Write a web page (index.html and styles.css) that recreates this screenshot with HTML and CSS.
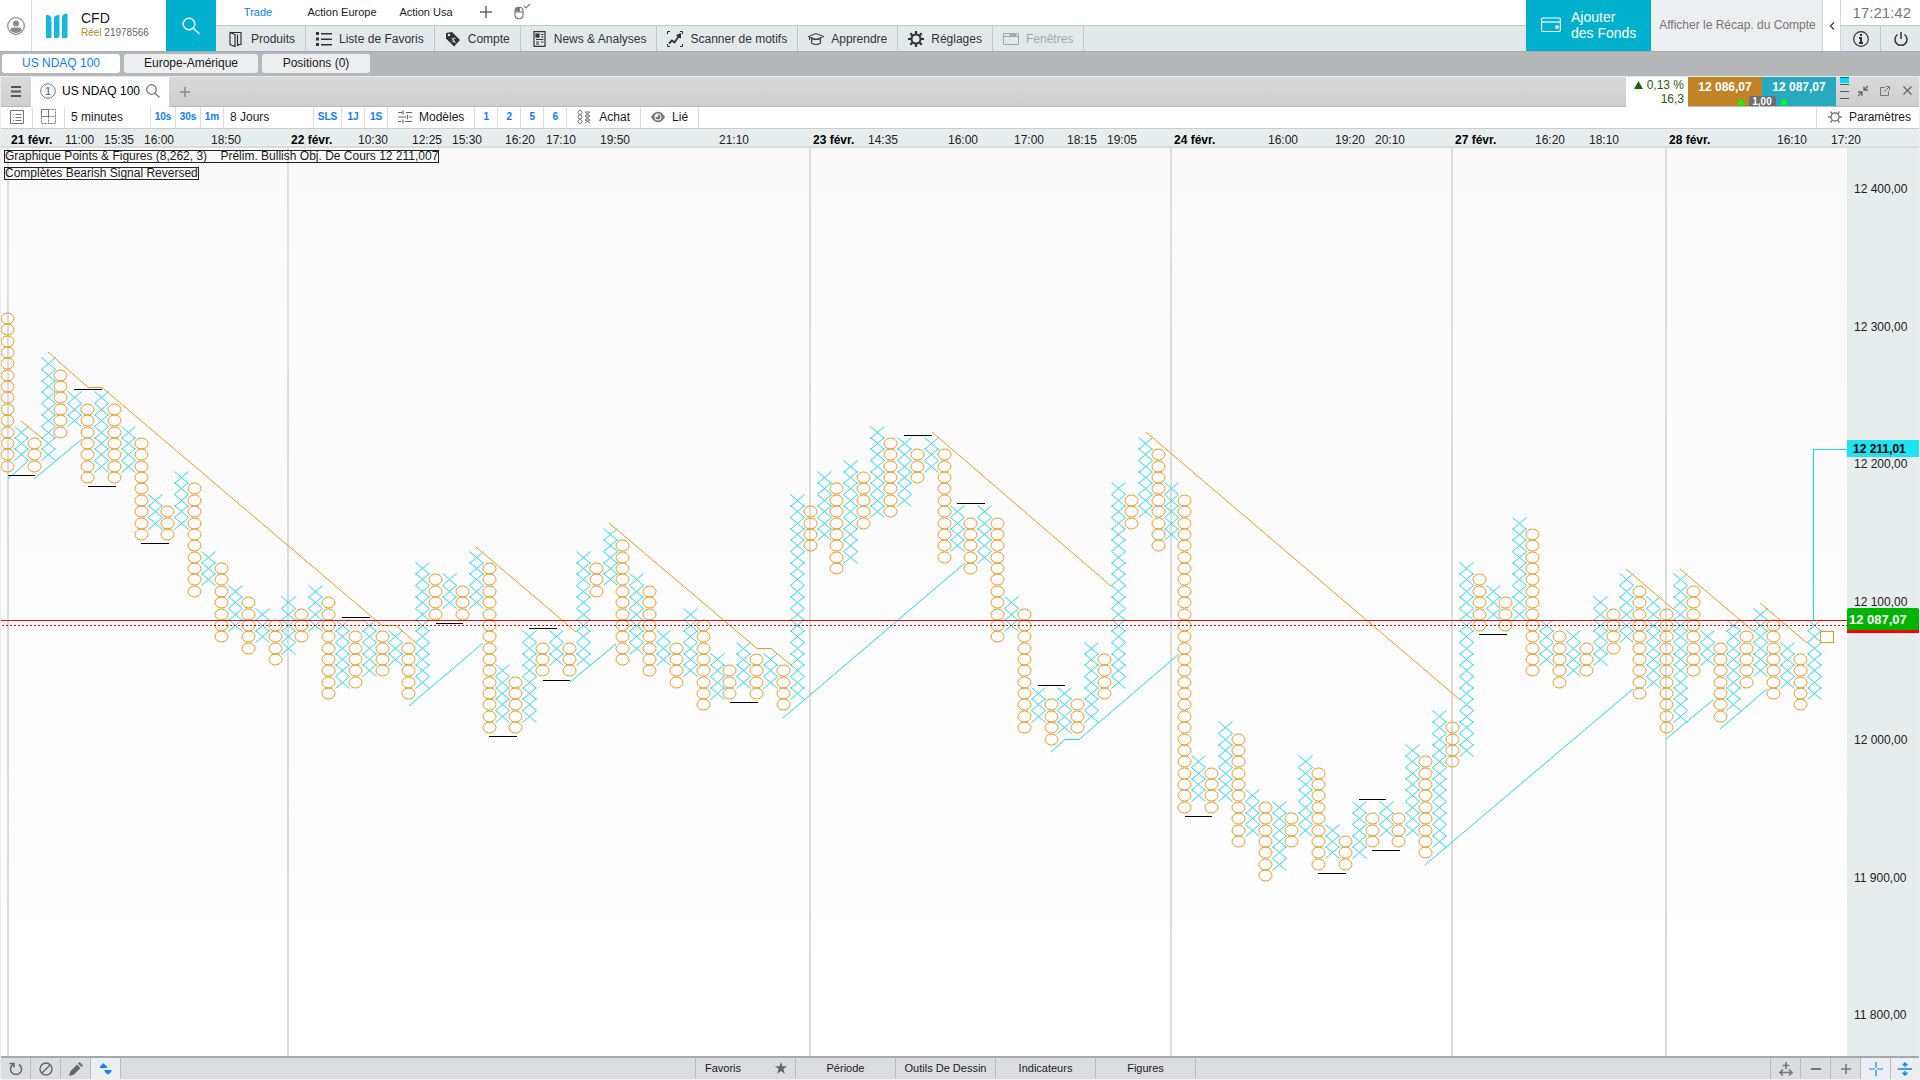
FILE: index.html
```html
<!DOCTYPE html>
<html lang="fr">
<head>
    <meta charset="UTF-8">
    <meta name="viewport" content="width=device-width, initial-scale=1.0">
    <title>US NDAQ 100 - CFD</title>
    <link rel="stylesheet" href="styles.css">
</head>
<body>
    <header class="header">
        <button class="user-button" aria-label="Profil">
            <svg width="18" height="18" viewBox="0 0 18 18"><circle cx="9" cy="9" r="8.300" fill="none" stroke="#8a8a8a" stroke-width="1.200"/><circle cx="9" cy="6.500" r="3" fill="#8a8a8a"/><path d="M3 13c1-2.500 3.500-2.500 6-2.500s5 0 6 2.500c-1.500 2-3.500 3-6 3s-4.500-1-6-3z" fill="#8a8a8a"/></svg>
        </button>
        <div class="account">
            <svg width="22" height="26" viewBox="0 0 22 26" fill="#14b8dc"><path d="M0 2c4 0 5.500 1.500 5.500 4v19H0zM8 5c0-2 2-3 5.500-3v21c0 1-.500 2-1.500 2H8zM16 4.500C16 2 18 .5 21.500.5v23c0 1-.500 1.500-1.500 1.500h-4z"/></svg>
            <div class="account-text">
                <div class="account-type">CFD</div>
                <div class="account-id"><span class="account-mode">Réel</span> 21978566</div>
            </div>
        </div>
        <button class="search-button" aria-label="Rechercher">
            <svg width="18" height="18" viewBox="0 0 18 18" fill="none" stroke="#fff" stroke-width="1.400"><circle cx="7" cy="7" r="5.800"/><path d="M11 11l6.500 6"/></svg>
        </button>
        <div class="menus">
            <nav class="layouts">
                <a class="layout active" href="#">Trade</a>
                <a class="layout" href="#">Action Europe</a>
                <a class="layout" href="#">Action Usa</a>
                <button class="layout-tool" aria-label="Ajouter un onglet">
                    <svg width="12" height="12" viewBox="0 0 12 12" stroke="#666" stroke-width="1.500"><path d="M6 0v12M0 6h12"/></svg>
                </button>
                <button class="layout-tool" aria-label="Souris">
                    <svg width="18" height="18" viewBox="0 0 18 18" fill="none" stroke="#777" stroke-width="1.200"><path d="M2 8c0-5 8-5 8 0v4c0 5-8 5-8 0zM2 9h8M6 4.500V9"/><path d="M3 5h3v3H3z" fill="#777"/><path d="M11 3l2 2 4-4"/></svg>
                </button>
            </nav>
            <nav class="nav">
                <a class="nav-item" href="#">
                    <svg width="16" height="16" viewBox="0 0 16 16" fill="none" stroke="#333" stroke-width="1.200"><path d="M2 1.500h11v12h-3M2 1.500l5 2v12l-5-2zM9.500 3.500v11l2-1"/></svg>
                    Produits</a>
                <a class="nav-item" href="#">
                    <svg width="16" height="16" viewBox="0 0 16 16" fill="#333"><path d="M0 1h3v3H0zM0 6.500h3v3H0zM0 12h3v3H0zM5 2h11v1.500H5zM5 7.500h11V9H5zM5 13h11v1.500H5z"/></svg>
                    Liste de Favoris</a>
                <a class="nav-item" href="#">
                    <svg width="16" height="16" viewBox="0 0 16 16"><path d="M1 2l6-1 8 8-6 6.500-8-8z" fill="#333"/><circle cx="4" cy="4" r="1.200" fill="#e3e9ea"/><path d="M10.500 7.500c-2-1.500-3 0-2 1.500s0 3-2 1M7 7l3.500 5" fill="none" stroke="#e3e9ea"/></svg>
                    Compte</a>
                <a class="nav-item" href="#">
                    <svg width="16" height="16" viewBox="0 0 16 16" fill="none" stroke="#333" stroke-width="1.200"><path d="M3 .6h11v14.800H3z"/><path d="M5 3.500h3M10 3.500h2.500M5 6h3M10 6h2.500M5 8.500h7.500M5 11h3M10 11h2.500M5 13h3"/><path d="M5 3h3v3H5z" fill="#333"/></svg>
                    News &amp; Analyses</a>
                <a class="nav-item" href="#">
                    <svg width="16" height="16" viewBox="0 0 16 16" fill="none" stroke="#333"><path d="M.5 3V.5H3M13 .5h2.500V3M15.500 13v2.500H13M3 15.500H.5V13"/><path d="M2 12.500l3-3 2.500 2L12 5" stroke-width="1.800"/><path d="M9.500 4.500L13.500 2.500v4.500z" fill="#333"/></svg>
                    Scanner de motifs</a>
                <a class="nav-item" href="#">
                    <svg width="16" height="16" viewBox="0 0 16 16" fill="none" stroke="#444" stroke-width="1.100"><path d="M.5 5.500L8 2.500l7.500 3L8 8.500zM3.500 7v5c2.500 2 6.500 2 9 0V7M3.500 9c3-1 6-1 9 0M1.500 6v3"/></svg>
                    Apprendre</a>
                <a class="nav-item" href="#">
                    <svg width="16" height="16" viewBox="0 0 16 16" fill="none" stroke="#333"><circle cx="8" cy="8" r="4.500" stroke-width="2"/><path d="M8 0v3M8 13v3M0 8h3M13 8h3M2.300 2.300l2.200 2.200M11.500 11.500l2.200 2.200M2.300 13.700l2.200-2.200M11.500 4.500l2.200-2.200" stroke-width="2.200"/></svg>
                    Réglages</a>
                <a class="nav-item disabled" href="#">
                    <svg width="16" height="16" viewBox="0 0 16 16" fill="none" stroke="#a5a9aa"><path d="M.5 2.500h15v11H.5zM.5 5.500h15"/><path d="M7 3h6v2H7z" fill="#a5a9aa"/></svg>
                    Fenêtres</a>
            </nav>
        </div>
        <button class="funds-button">
            <svg width="20" height="16" viewBox="0 0 20 16" fill="none" stroke="#fff" stroke-width="1.200"><rect x=".6" y="1" width="18.800" height="13.500" rx="1.500"/><path d="M.6 5h18.800"/><path d="M15 9h2v2h-2z" fill="#fff"/></svg>
            <span>Ajouter<br>des Fonds</span>
        </button>
        <button class="summary-button">Afficher le Récap. du Compte</button>
        <button class="collapse-button" aria-label="Réduire">
            <svg width="6" height="8" viewBox="0 0 6 8" fill="none" stroke="#555" stroke-width="1.600"><path d="M5 .5L1.500 4 5 7.500"/></svg>
        </button>
        <div class="status">
            <div class="clock">17:21:42</div>
            <div class="status-buttons">
                <button aria-label="Informations">
                    <svg width="16" height="16" viewBox="0 0 16 16" fill="none" stroke="#333" stroke-width="1.200"><circle cx="8" cy="8" r="7.300"/><path d="M8 3v2M6 7h2v5M6 12h4" stroke-width="2"/></svg>
                </button>
                <button aria-label="Déconnexion">
                    <svg width="16" height="16" viewBox="0 0 16 16" fill="none" stroke="#333" stroke-width="1.500"><path d="M8 1v7M4.500 3.500a6 6 0 1 0 7 0"/></svg>
                </button>
            </div>
        </div>
    </header>

    <nav class="pages">
        <a class="page active" href="#">US NDAQ 100</a>
        <a class="page page-wide" href="#">Europe-Amérique</a>
        <a class="page" href="#">Positions (0)</a>
    </nav>

    <main class="window">
        <div class="title-bar">
            <button class="menu-button" aria-label="Menu">
                <svg width="10" height="11" viewBox="0 0 10 11" stroke="#555" stroke-width="2"><path d="M0 1h10M0 5.500h10M0 10h10"/></svg>
            </button>
            <div class="chart-tab">
                <svg width="16" height="16" viewBox="0 0 16 16"><circle cx="8" cy="8" r="7.300" fill="none" stroke="#777"/><text class="tab-number" x="8" y="12" text-anchor="middle">1</text></svg>
                <span>US NDAQ 100</span>
                <svg width="14" height="14" viewBox="0 0 14 14" fill="none" stroke="#777" stroke-width="1.300"><circle cx="5.500" cy="5.500" r="4.800"/><path d="M9 9l4.500 4.500"/></svg>
            </div>
            <button class="add-button" aria-label="Ajouter">
                <svg width="10" height="10" viewBox="0 0 10 10" stroke="#888" stroke-width="1.500"><path d="M5 0v10M0 5h10"/></svg>
            </button>
            <div class="change">
                <div><svg width="9" height="8" viewBox="0 0 9 8" fill="#1f6008"><path d="M4.500 0L9 8H0z"/></svg> 0,13 %</div>
                <div>16,3</div>
            </div>
            <div class="quotes">
                <button class="quote sell">12 086,07</button>
                <button class="quote buy">12 087,07</button>
                <div class="spread">
                    <svg width="8" height="7" viewBox="0 0 8 7" fill="#0f0"><path d="M4 0l4 7H0z"/></svg>
                    <span>1,00</span>
                    <svg width="8" height="7" viewBox="0 0 8 7" fill="#0f0"><path d="M4 0l4 7H0z"/></svg>
                </div>
            </div>
            <div class="window-buttons">
                <svg width="9" height="27" viewBox="0 0 9 27"><path d="M0 0h9v6H0z" fill="#00dcff"/><path d="M0 7.500h9M0 14.500h9M0 21.500h9" stroke="#555"/><path d="M0 .5h9" stroke="#077"/></svg>
                <button aria-label="Réduire">
                    <svg width="12" height="12" viewBox="0 0 12 12" fill="none" stroke="#666" stroke-width="1.300"><path d="M11 1L7.500 4.500M7 1.500V5h4M1 11l3.500-3.500M1 7h4v4"/></svg>
                </button>
                <button aria-label="Détacher">
                    <svg width="10" height="10" viewBox="0 0 10 10" fill="none" stroke="#777"><path d="M5 1.500H.5v8h8V5M4 6l5-5M6 .5h3.500V4"/></svg>
                </button>
                <button aria-label="Fermer">
                    <svg width="9" height="9" viewBox="0 0 9 9" stroke="#666" stroke-width="1.200"><path d="M.5.5l8 8M8.500.5l-8 8"/></svg>
                </button>
            </div>
        </div>

        <div class="toolbar">
            <button class="tool tool-icon" aria-label="Liste">
                <svg width="14" height="14" viewBox="0 0 14 14" fill="none" stroke="#777"><path d="M.5.5h13v13H.5zM3 4.500h1M5.500 4.500h6M3 7.500h1M5.500 7.500h6M3 10.500h1M5.500 10.500h6"/></svg>
            </button>
            <button class="tool tool-icon" aria-label="Disposition">
                <svg width="15" height="15" viewBox="0 0 15 15" fill="none" stroke="#777"><path d="M.5.5h7v7h-7z"/><path d="M7.500.5h7v14H.5v-7M7.500 7.500v7M7.500 7.500h7" stroke-dasharray="2 1"/></svg>
            </button>
            <button class="tool tool-period">5 minutes</button>
            <button class="tool tool-short">10s</button>
            <button class="tool tool-short">30s</button>
            <button class="tool tool-short">1m</button>
            <button class="tool tool-range">8 Jours</button>
            <button class="tool tool-short tool-sls">SLS</button>
            <button class="tool tool-short">1J</button>
            <button class="tool tool-short">1S</button>
            <button class="tool tool-label">
                <svg width="14" height="14" viewBox="0 0 14 14" fill="none" stroke="#666" stroke-width="1.200"><path d="M0 2.500h4M8 2.500h6M0 7h8M11 7h3M0 11.500h3M7 11.500h7M5 .5v4M9.500 5v4M5 9.500v4"/></svg>
                Modèles</button>
            <button class="tool tool-short">1</button>
            <button class="tool tool-short">2</button>
            <button class="tool tool-short">5</button>
            <button class="tool tool-short">6</button>
            <button class="tool tool-label">
                <svg width="15" height="14" viewBox="0 0 15 14" fill="none" stroke="#777"><circle cx="3" cy="2.500" r="2"/><circle cx="3" cy="7" r="2"/><circle cx="3" cy="11.500" r="2"/><path d="M8 2l5 4M13 2L8 6l5 4M13 6l-5 4 5 3M13 10l-5 3M8 2h5M8 6h5M8 10h5"/></svg>
                Achat</button>
            <button class="tool tool-label">
                <svg width="14" height="12" viewBox="0 0 14 12"><path d="M0 6c4-7 10-7 14 0-4 7-10 7-14 0z" fill="#777"/><circle cx="7" cy="6" r="3.500" fill="#fff"/><path d="M7 6V3.500A2.500 2.500 0 1 1 4.500 6z" fill="#777"/></svg>
                Lié</button>
            <button class="tool tool-label tool-settings">
                <svg width="14" height="14" viewBox="0 0 14 14" fill="none" stroke="#777" stroke-width="1.300"><circle cx="7" cy="7" r="4"/><path d="M0 7h3M11 7h3M2.500 1.500l2 2.500M11.500 1.500l-2 2.500M2.500 12.500l2-2.500M11.500 12.500l-2-2.500"/></svg>
                Paramètres</button>
        </div>

        <svg class="time-axis" id="timeAxis"></svg>
        <div class="chart">
            <svg class="plot" id="plot"></svg>
            <svg class="price-axis" id="priceAxis"></svg>
            <div class="legend">
                <span>Graphique Points &amp; Figures (8,262, 3)&nbsp;&nbsp;&nbsp; Prélim. Bullish Obj. De Cours 12 211,007</span>
                <span>Complètes Bearish Signal Reversed</span>
            </div>
        </div>

        <footer class="footer">
            <div class="footer-group">
                <button class="footer-icon" aria-label="Réinitialiser">
                    <svg width="14" height="14" viewBox="0 0 14 14" fill="none" stroke="#666" stroke-width="1.500"><path d="M4 2.500a5.500 5.500 0 1 0 6 0M.5 1.500H5v4"/></svg>
                </button>
                <button class="footer-icon" aria-label="Effacer">
                    <svg width="14" height="14" viewBox="0 0 14 14" fill="none" stroke="#666" stroke-width="1.400"><circle cx="7" cy="7" r="6"/><path d="M3 11l8-8"/></svg>
                </button>
                <button class="footer-icon" aria-label="Dessiner">
                    <svg width="14" height="14" viewBox="0 0 14 14" fill="#666"><path d="M0 14l1.500-5L8 2.500 11.500 6 5 12.500zM9 1.500L10.500 0 14 3.500 12.500 5z"/></svg>
                </button>
                <button class="footer-icon on" aria-label="Échelle">
                    <svg width="12" height="12" viewBox="0 0 12 12" fill="#0a84ff"><path d="M0 5c0-3 2.500-3 3.500-5C4.500 2 7 2 7 5zM4.500 7h7c0 3-2.500 3-3.500 5-1-2-3.500-2-3.500-5z"/></svg>
                </button>
            </div>
            <div class="footer-group footer-menus">
                <button class="footer-menu favorites">Favoris
                    <svg width="12" height="12" viewBox="0 0 12 12" fill="#666"><path d="M6 0l1.500 4.300H12L8.400 7l1.400 4.700L6 9l-3.800 2.700L3.600 7 0 4.300h4.500z"/></svg>
                </button>
                <button class="footer-menu">Période</button>
                <button class="footer-menu">Outils De Dessin</button>
                <button class="footer-menu">Indicateurs</button>
                <button class="footer-menu">Figures</button>
            </div>
            <div class="footer-group footer-zoom">
                <button class="footer-icon" aria-label="Ajuster">
                    <svg width="14" height="14" viewBox="0 0 14 14" fill="none" stroke="#777" stroke-width="1.600"><path d="M7 0v7M3.500 3.500h7M1 10.500h12M4 7.500l-3 3 3 3M10 7.500l3 3-3 3"/></svg>
                </button>
                <button class="footer-icon" aria-label="Zoom arrière">
                    <svg width="10" height="10" viewBox="0 0 10 10" stroke="#777" stroke-width="2"><path d="M0 5h10"/></svg>
                </button>
                <button class="footer-icon" aria-label="Zoom avant">
                    <svg width="10" height="10" viewBox="0 0 10 10" stroke="#777" stroke-width="1.600"><path d="M5 0v10M0 5h10"/></svg>
                </button>
                <button class="footer-icon on" aria-label="Curseur">
                    <svg width="14" height="14" viewBox="0 0 14 14" stroke="#0a84ff" stroke-width="1.200"><path d="M7 0v6M7 8v6M0 7h6M8 7h6"/></svg>
                </button>
                <button class="footer-icon on" aria-label="Centrer">
                    <svg width="14" height="14" viewBox="0 0 14 14" fill="none" stroke="#0a84ff" stroke-width="1.400"><path d="M0 7h14M7 5V1M4.500 3.500L7 1l2.500 2.500M7 9v4M4.500 10.500L7 13l2.500-2.500"/></svg>
                </button>
            </div>
        </footer>
    </main>

    <script src="chart.js"></script>
</body>
</html>
```
FILE: styles.css
```css
* {
    box-sizing: border-box;
}

body {
    margin: 0;
    height: 100vh;
    display: flex;
    flex-direction: column;
    background-color: #b6b7b9;
    color: #1a1a1a;
    font-family: "Liberation Sans", Arial, sans-serif;
    font-size: 12px;
    overflow: hidden;
}

button {
    padding: 0;
    border: none;
    background: none;
    color: inherit;
    font-family: inherit;
    font-size: inherit;
    cursor: pointer;
}

a {
    color: inherit;
    text-decoration: none;
}

svg {
    display: block;
    flex-shrink: 0;
}

/* header */
.header {
    display: flex;
    height: 51px;
    background-color: white;
}

.user-button {
    width: 32px;
    display: flex;
    align-items: center;
    justify-content: center;
    border-right: 1px solid #ddd;
}

.account {
    width: 134px;
    display: flex;
    align-items: center;
    gap: 13px;
    padding-left: 14px;
}

.account-type {
    font-size: 14px;
    line-height: 14px;
}

.account-id {
    font-size: 10px;
    line-height: 16px;
    color: #666;
    white-space: nowrap;
}

.account-mode {
    color: #c08a1a;
}

.search-button {
    width: 50px;
    background-color: #00b0cd;
    display: flex;
    align-items: center;
    justify-content: center;
}

.menus {
    flex: 1;
    display: flex;
    flex-direction: column;
}

.layouts {
    height: 25px;
    display: flex;
    align-items: center;
    padding-bottom: 2px;
    font-size: 11px;
}

.layout {
    width: 84px;
    text-align: center;
}

.layout.active {
    color: #0a7cff;
}

.layout-tool {
    width: 36px;
    display: flex;
    justify-content: center;
}

.nav {
    flex: 1;
    display: flex;
    background-color: #e3e9ea;
    border-top: 1px solid #c3c7c9;
}

.nav-item {
    display: flex;
    align-items: center;
    gap: 7px;
    padding: 0 10px;
    border-right: 1px solid #c3c7c9;
    color: #333;
    white-space: nowrap;
}

.nav-item:first-child {
    padding-left: 12px;
}

.nav-item.disabled {
    color: #a5a9aa;
}

.funds-button {
    width: 125px;
    display: flex;
    align-items: center;
    gap: 10px;
    padding: 0 0 2px 15px;
    background-color: #00b0cd;
    color: white;
    font-size: 14px;
    line-height: 16px;
    text-align: left;
}

.summary-button {
    width: 171px;
    padding: 0 0 2px 2px;
    background-color: #edeef0;
    color: #777;
}

.collapse-button {
    width: 19px;
    display: flex;
    align-items: center;
    justify-content: center;
    border-left: 1px solid #d5d5d5;
    border-right: 1px solid #d5d5d5;
}

.status {
    width: 79px;
    display: flex;
    flex-direction: column;
}

.clock {
    height: 25px;
    line-height: 26px;
    padding-right: 9px;
    text-align: right;
    font-size: 15px;
    color: #777;
}

.status-buttons {
    flex: 1;
    display: flex;
    background-color: #e3e9ea;
    border-top: 1px solid #c3c7c9;
}

.status-buttons button {
    flex: 1;
    display: flex;
    align-items: center;
    justify-content: center;
}

.status-buttons button + button {
    border-left: 1px solid #c3c7c9;
}

/* page tabs */
.pages {
    height: 25px;
    display: flex;
    gap: 4px;
    padding: 2px;
    border-top: 1px solid #a2a9b8;
}

.page {
    width: 108px;
    height: 19px;
    border-radius: 3px;
    background-color: #edeef0;
    line-height: 19px;
    text-align: center;
}

.page.active {
    width: 118px;
    background-color: white;
    color: #0a7cff;
}

.page-wide {
    width: 134px;
}

/* chart window */
.window {
    flex: 1;
    min-height: 0;
    display: flex;
    flex-direction: column;
    padding: 0 1px;
    background-color: #ededed;
}

.title-bar {
    height: 31px;
    display: flex;
    background: linear-gradient(#dadada, #cecece);
    border-top: 1px solid #e8e8e8;
    border-bottom: 1px solid #b8babd;
}

.menu-button {
    width: 30px;
    display: flex;
    align-items: center;
    justify-content: center;
}

.chart-tab {
    width: 138px;
    display: flex;
    align-items: center;
    gap: 6px;
    padding: 0 0 2px 9px;
    margin-bottom: -1px;
    background-color: white;
    color: #000;
    white-space: nowrap;
}

.tab-number {
    font-size: 11px;
    fill: #555;
}

.add-button {
    width: 32px;
    display: flex;
    align-items: center;
    justify-content: center;
}

.change {
    width: 62px;
    margin-left: auto;
    margin-bottom: -1px;
    padding: 1px 4px;
    background-color: white;
    color: #1f6008;
    text-align: right;
    line-height: 14px;
}

.change svg {
    display: inline-block;
}

.quotes {
    position: relative;
    width: 148px;
    display: flex;
}

.quote {
    flex: 1;
    padding-bottom: 9px;
    color: white;
    font-weight: bold;
}

.sell {
    background-color: #c08427;
}

.buy {
    background-color: #27aac0;
}

.spread {
    position: absolute;
    left: 0;
    right: 0;
    bottom: 0;
    display: flex;
    align-items: center;
    justify-content: center;
    gap: 4px;
    pointer-events: none;
}

.spread span {
    width: 27px;
    height: 10px;
    border-radius: 2px 2px 0 0;
    background-color: #6d6d70;
    color: white;
    font-size: 10px;
    line-height: 11px;
    font-weight: bold;
    text-align: center;
}

.window-buttons {
    width: 83px;
    display: flex;
    align-items: center;
    padding: 0 0 2px 4px;
}

.window-buttons button {
    width: 22px;
    display: flex;
    justify-content: center;
}

.window-buttons svg + button {
    margin-left: 3px;
}

/* toolbar */
.toolbar {
    height: 22px;
    display: flex;
    background-color: white;
    border-bottom: 1px solid #cacccf;
}

.tool {
    display: flex;
    align-items: center;
    justify-content: center;
    padding-bottom: 2px;
    border-right: 1px solid #ddd;
}

.tool-icon {
    width: 32px;
}

.tool-short {
    width: 23px;
    font-size: 10px;
    font-weight: bold;
    color: #0a7cff;
}

.tool-period + .tool-short,
.tool-period + .tool-short + .tool-short {
    width: 25px;
}

.tool-period {
    width: 86px;
}

.tool-range {
    width: 90px;
}

.tool-period,
.tool-range {
    justify-content: flex-start;
    padding-left: 6px;
}

.tool-sls {
    width: 28px;
}

.tool-label {
    gap: 7px;
    padding: 0 10px 2px;
}

.tool-settings {
    margin-left: auto;
    padding: 0 8px 2px 11px;
    border-left: 1px solid #ddd;
    border-right: none;
}

/* chart */
.time-axis {
    width: 100%;
    height: 19px;
    background-color: #e7ecec;
    border-bottom: 2px solid #d9dddd;
}

.chart {
    position: relative;
    flex: 1;
    min-height: 0;
    display: flex;
}

.plot {
    flex: 1;
    min-width: 0;
    height: 100%;
    background: linear-gradient(#fafafa, #ffffff);
}

.price-axis {
    width: 72px;
    height: 100%;
    background-color: #e7ecec;
}

.time-axis text,
.price-axis text {
    font-size: 12px;
    fill: #222;
}

.time-axis .day {
    font-weight: bold;
    fill: #000;
}

.price-axis .target {
    font-weight: bold;
    fill: #000;
}

.price-axis .last {
    font-size: 13px;
    font-weight: bold;
    fill: #fff;
}

.legend {
    position: absolute;
    top: 2px;
    left: 3px;
    display: flex;
    flex-direction: column;
    align-items: flex-start;
    gap: 4px;
}

.legend span {
    border: 1px solid #222;
    line-height: 11px;
    white-space: nowrap;
}

.day-line {
    stroke: #dcdcdc;
    stroke-width: 2;
}

.up,
.down,
.level,
.last-line,
.bid-line {
    fill: none;
    stroke-width: 1;
}

.up {
    stroke: #18dcee;
}

.down {
    stroke: #ee9820;
}

.level {
    stroke: #000;
}

.last-line {
    stroke: #f00;
}

.bid-line {
    stroke: #d00;
    stroke-dasharray: 2 2;
}

/* footer */
.footer {
    height: 24px;
    display: flex;
    justify-content: space-between;
    background-color: #dcdde0;
    border-top: 2px solid #a4a9ab;
    border-bottom: 1px solid #f0f0f0;
    font-size: 11px;
}

.footer-group {
    display: flex;
}

.footer-icon {
    width: 30px;
    display: flex;
    align-items: center;
    justify-content: center;
    border-right: 1px solid #b9bbbd;
}

.footer-icon.on {
    background-color: #edeef1;
}

.footer-menus,
.footer-zoom {
    border-left: 1px solid #b9bbbd;
}

.footer-menu {
    width: 100px;
    padding-bottom: 1px;
    border-right: 1px solid #b9bbbd;
}

.favorites {
    display: flex;
    align-items: center;
    justify-content: space-between;
    padding: 0 8px 1px 9px;
}

.footer-zoom .footer-icon:last-child {
    width: 28px;
    border-right: none;
}
```
FILE: chart.js
```js
const NS = 'http://www.w3.org/2000/svg';

// origin of the plot inside the window
const LEFT = 1;
const TOP = 148;

const COL_WIDTH = 13.38;
const BOX_HEIGHT = 11.37;

// [first box, last box] of each column, columns alternate O, X, O, X...
const columns = [
    [0, 13], [10, 12], [11, 13], [4, 12], [5, 10], [7, 9], [8, 14], [7, 13], [8, 14], [10, 13],
    [11, 19], [16, 18], [17, 19], [14, 18], [15, 24], [21, 23], [22, 28], [24, 27], [25, 29], [26, 28],
    [27, 30], [25, 29], [26, 28], [24, 27], [25, 33], [27, 32], [28, 32], [27, 31], [28, 31], [28, 30],
    [29, 33], [22, 32], [23, 26], [23, 25], [24, 26], [21, 25], [22, 36], [31, 35], [32, 36], [28, 35],
    [29, 31], [28, 30], [29, 31], [21, 30], [22, 24], [19, 23], [20, 30], [23, 29], [24, 31], [28, 30],
    [29, 32], [26, 31], [27, 34], [30, 33], [31, 33], [29, 32], [30, 33], [30, 32], [31, 34], [16, 33],
    [17, 20], [14, 19], [15, 22], [13, 21], [14, 18], [10, 17], [11, 17], [11, 16], [12, 14], [11, 13],
    [12, 21], [17, 20], [18, 22], [17, 21], [18, 28], [25, 27], [26, 36], [33, 35], [34, 37], [33, 36],
    [34, 36], [29, 35], [30, 33], [15, 32], [16, 18], [11, 17], [12, 20], [15, 19], [16, 43], [39, 42],
    [40, 43], [36, 42], [37, 46], [42, 45], [43, 49], [43, 48], [44, 46], [39, 45], [40, 48], [45, 47],
    [46, 48], [43, 47], [44, 46], [43, 45], [44, 46], [38, 45], [39, 47], [35, 46], [36, 39], [22, 38],
    [23, 27], [24, 26], [25, 27], [18, 26], [19, 31], [27, 30], [28, 32], [28, 31], [29, 31], [25, 30],
    [26, 29], [23, 28], [24, 33], [25, 32], [26, 36], [23, 35], [24, 31], [28, 30], [29, 35], [27, 34],
    [28, 32], [26, 31], [27, 33], [29, 32], [30, 34], [27, 33]
];

const dayLines = [8, 288, 810, 1171, 1452, 1666];

const downTrends = [
    '21,421 42,438',
    '48,352 88,387.5 102,387.5 382,625.5 396,625.5 416,643',
    '476,547 576,632',
    '609,523 757,648.5 771,648.5 791,665',
    '932,432 1111,586',
    '1146,432 1459,699',
    '1626,569 1673,609',
    '1680,569 1753,631',
    '1760,603 1807,643'
];

const upTrends = [
    '8,479 28,461',
    '34,479 82,439',
    '409,706 483,643',
    '570,682 616,644',
    '783,718 965,563',
    '1051,752 1065,739.5 1079,739.5 1179,654',
    '1425,865 1633,689',
    '1666,739 1713,700',
    '1720,729 1767,689',
    '1813.5,620 1813.5,449.5 1850,449.5'
];

// [x1, x2, y]
const levels = [
    [8, 35, 475], [74, 102, 389], [88, 116, 486], [141, 169, 543], [342, 370, 617], [436, 463, 623],
    [489, 517, 736], [529, 557, 628], [543, 570, 680], [730, 758, 702], [904, 932, 435], [957, 985, 503],
    [1038, 1065, 685], [1185, 1212, 816], [1318, 1346, 873], [1359, 1386, 799], [1372, 1400, 850], [1479, 1507, 634]
];

const times = [
    [11, '21 févr.'], [65, '11:00'], [104, '15:35'], [144, '16:00'], [211, '18:50'],
    [291, '22 févr.'], [358, '10:30'], [412, '12:25'], [452, '15:30'], [505, '16:20'], [546, '17:10'],
    [600, '19:50'], [719, '21:10'], [813, '23 févr.'], [868, '14:35'], [948, '16:00'], [1014, '17:00'],
    [1067, '18:15'], [1107, '19:05'], [1174, '24 févr.'], [1268, '16:00'], [1335, '19:20'], [1375, '20:10'],
    [1455, '27 févr.'], [1535, '16:20'], [1589, '18:10'], [1669, '28 févr.'], [1777, '16:10'], [1831, '17:20']
];

const prices = ['12 400,00', '12 300,00', '12 200,00', '12 100,00', '12 000,00', '11 900,00', '11 800,00'];

function add(parent, tag, attrs, text) {
    const el = document.createElementNS(NS, tag);
    for (const key in attrs) {
        el.setAttribute(key, attrs[key]);
    }
    if (text) {
        el.textContent = text;
    }
    parent.appendChild(el);
    return el;
}

function drawPlot() {
    const plot = add(document.getElementById('plot'), 'g', { transform: `translate(${-LEFT} ${-TOP})` });

    dayLines.forEach(x => add(plot, 'line', { class: 'day-line', x1: x, x2: x, y1: TOP, y2: 4000 }));

    columns.forEach(([first, last], i) => {
        const x = 7.4 + COL_WIDTH * i;
        for (let row = first; row <= last; row++) {
            const y = Math.floor(318.4 + BOX_HEIGHT * row);
            if (i % 2 === 0) {
                add(plot, 'ellipse', { class: 'down', cx: Math.floor(x) + 0.5, cy: y + 0.5, rx: 6.5, ry: 5.5 });
            } else {
                const cx = Math.round(x) + 0.5;
                const cy = y + 0.5;
                add(plot, 'path', { class: 'up', d: `M${cx - 7} ${cy - 6}l14 12m0 -12l-14 12` });
            }
        }
    });

    downTrends.forEach(points => add(plot, 'polyline', { class: 'down', points }));
    upTrends.forEach(points => add(plot, 'polyline', { class: 'up', points }));
    levels.forEach(([x1, x2, y]) => add(plot, 'line', { class: 'level', x1, x2, y1: y + 0.5, y2: y + 0.5 }));

    add(plot, 'line', { class: 'last-line', x1: 0, x2: 4000, y1: 620.5, y2: 620.5 });
    add(plot, 'line', { class: 'bid-line', x1: 2, x2: 4000, y1: 625.5, y2: 625.5 });
    add(plot, 'rect', { class: 'down', x: 1820.5, y: 631.5, width: 13, height: 11 });
}

function drawAxes() {
    const timeAxis = document.getElementById('timeAxis');
    times.forEach(([x, label]) => {
        add(timeAxis, 'text', { class: label.includes('févr') ? 'day' : 'hour', x: x - LEFT, y: 15 }, label);
    });

    const axis = document.getElementById('priceAxis');
    prices.forEach((label, i) => {
        add(axis, 'text', { x: 7, y: Math.round(45 + 137.7 * i) }, label);
    });

    // price target
    add(axis, 'rect', { x: 0, y: 440 - TOP, width: 72, height: 17, fill: '#1fe3f0' });
    add(axis, 'text', { class: 'target', x: 6, y: 453 - TOP }, '12 211,01');

    // last price
    add(axis, 'rect', { x: 0, y: 616 - TOP, width: 72, height: 17, fill: '#f00' });
    add(axis, 'rect', { x: 0, y: 608 - TOP, width: 72, height: 22, rx: 2, fill: '#00b400' });
    add(axis, 'text', { class: 'last', x: 2, y: 624 - TOP }, '12 087,07');
}

drawPlot();
drawAxes();
```
